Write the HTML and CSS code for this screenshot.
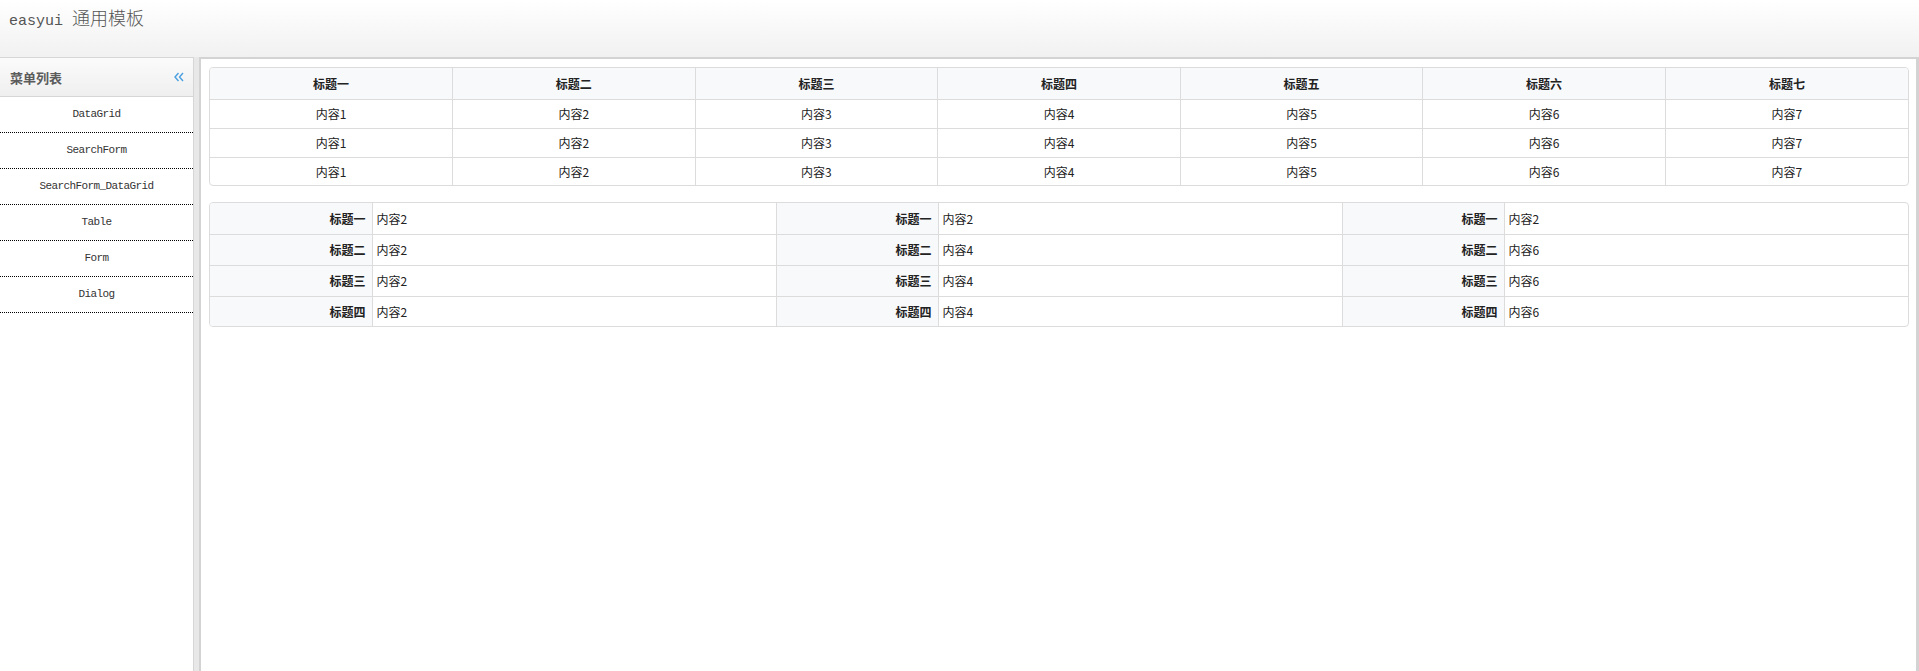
FILE: index.html
```html
<!DOCTYPE html>
<html lang="zh">
<head>
<meta charset="utf-8">
<title>easyui 通用模板</title>
<link rel="stylesheet" href="styles.css">
</head>
<body>
<div class="app">
  <header class="top">
    <span class="brand-latin">easyui</span><span class="brand-gap"> </span><span class="brand-cjk">通用模板</span>
  </header>
  <div class="main">
    <aside class="west">
      <div class="west-head">
        <span class="west-title">菜单列表</span>
        <svg class="collapse" width="10" height="10" viewBox="0 0 10 10" aria-hidden="true">
          <path d="M4.5 1 L1 5 L4.5 9 M9 1 L5.5 5 L9 9" fill="none" stroke="#4a9fe0" stroke-width="1.4"/>
        </svg>
      </div>
      <ul class="menu">
        <li>DataGrid</li>
        <li>SearchForm</li>
        <li>SearchForm_DataGrid</li>
        <li>Table</li>
        <li>Form</li>
        <li>Dialog</li>
      </ul>
    </aside>
    <div class="splitter"></div>
    <main class="center">
      <div class="box">
        <table class="grid">
          <thead>
            <tr><th>标题一</th><th>标题二</th><th>标题三</th><th>标题四</th><th>标题五</th><th>标题六</th><th>标题七</th></tr>
          </thead>
          <tbody>
            <tr><td>内容1</td><td>内容2</td><td>内容3</td><td>内容4</td><td>内容5</td><td>内容6</td><td>内容7</td></tr>
            <tr><td>内容1</td><td>内容2</td><td>内容3</td><td>内容4</td><td>内容5</td><td>内容6</td><td>内容7</td></tr>
            <tr><td>内容1</td><td>内容2</td><td>内容3</td><td>内容4</td><td>内容5</td><td>内容6</td><td>内容7</td></tr>
          </tbody>
        </table>
      </div>
      <div class="box box-form">
        <table class="form">
          <colgroup>
            <col class="c-label"><col><col class="c-label"><col><col class="c-label"><col>
          </colgroup>
          <tbody>
            <tr><th>标题一</th><td>内容2</td><th>标题一</th><td>内容2</td><th>标题一</th><td>内容2</td></tr>
            <tr><th>标题二</th><td>内容2</td><th>标题二</th><td>内容4</td><th>标题二</th><td>内容6</td></tr>
            <tr><th>标题三</th><td>内容2</td><th>标题三</th><td>内容4</td><th>标题三</th><td>内容6</td></tr>
            <tr><th>标题四</th><td>内容2</td><th>标题四</th><td>内容4</td><th>标题四</th><td>内容6</td></tr>
          </tbody>
        </table>
      </div>
    </main>
  </div>
</div>
</body>
</html>
```
FILE: styles.css
```css
* { box-sizing: border-box; }
html, body { margin: 0; padding: 0; height: 100%; }
body {
  font-family: "Noto Sans CJK SC", "Noto Sans", sans-serif;
  background: #fff;
  overflow: hidden;
}
.app {
  display: flex;
  flex-direction: column;
  height: 671px;
}
.top {
  height: 57px;
  flex: none;
  padding: 6px 9px 0;
  line-height: 22px;
  background: linear-gradient(to bottom, #ffffff 0%, #f1f1f1 100%);
  color: #555;
  white-space: nowrap;
}
.brand-latin, .brand-gap {
  font-family: "Liberation Mono", "Courier New", monospace;
  font-size: 15px;
}
.brand-cjk {
  font-family: "Noto Sans CJK SC", sans-serif;
  font-size: 18px;
  font-weight: 300;
}
.main {
  flex: 1;
  display: flex;
  min-height: 0;
}
.west {
  width: 194px;
  flex: none;
  border-top: 1px solid #d6d6d6;
  border-right: 1px solid #d6d6d6;
  background: #fff;
}
.west-head {
  height: 39px;
  display: flex;
  align-items: center;
  justify-content: space-between;
  padding: 0 9px 0 10px;
  border-bottom: 1px solid #d6d6d6;
  background: linear-gradient(to bottom, #fbfbfb 0%, #efefef 100%);
}
.west-title {
  font-size: 13px;
  font-weight: 700;
  color: #5c5c5c;
}
.collapse { display: block; }
.menu {
  list-style: none;
  margin: 0;
  padding: 0;
}
.menu li {
  height: 36px;
  line-height: 35px;
  text-align: center;
  border-bottom: 1px dotted #000;
  font-family: "Liberation Mono", "Courier New", monospace;
  font-size: 11px;
  font-weight: 400;
  letter-spacing: -0.6px;
  color: #333;
}
.splitter {
  width: 5px;
  flex: none;
  background: #e8e8e8;
}
.center {
  flex: 1;
  min-width: 0;
  border-top: 2px solid #d3d3d3;
  border-left: 2px solid #d3d3d3;
  border-right: 3px solid #d3d3d3;
  padding: 8px 7px 0 8px;
  background: #fff;
}
.box {
  border: 1px solid #dcdcdc;
  border-radius: 4px;
  overflow: hidden;
}
.box-form { margin-top: 16px; }
table {
  width: 100%;
  border-collapse: collapse;
  table-layout: fixed;
  font-size: 12px;
  color: #222;
}
th, td {
  border-right: 1px solid #dcdcdc;
  border-bottom: 1px solid #dcdcdc;
  padding: 0;
  white-space: nowrap;
}
tr > :last-child { border-right: 0; }
tbody tr:last-child > * { border-bottom: 0; }
.grid th {
  height: 31px;
  font-weight: 700;
  background: #f8f9fb;
  text-align: center;
}
.grid td {
  height: 29px;
  text-align: center;
}
.grid tbody tr:last-child td { height: 28px; }
.form .c-label { width: 162px; }
.form th, .form td { height: 31px; }
.form tbody tr:last-child > * { height: 30px; }
.form th {
  font-weight: 700;
  text-align: right;
  padding-right: 6px;
  background: #f8f9fb;
}
.form td {
  text-align: left;
  padding-left: 4px;
}
```
